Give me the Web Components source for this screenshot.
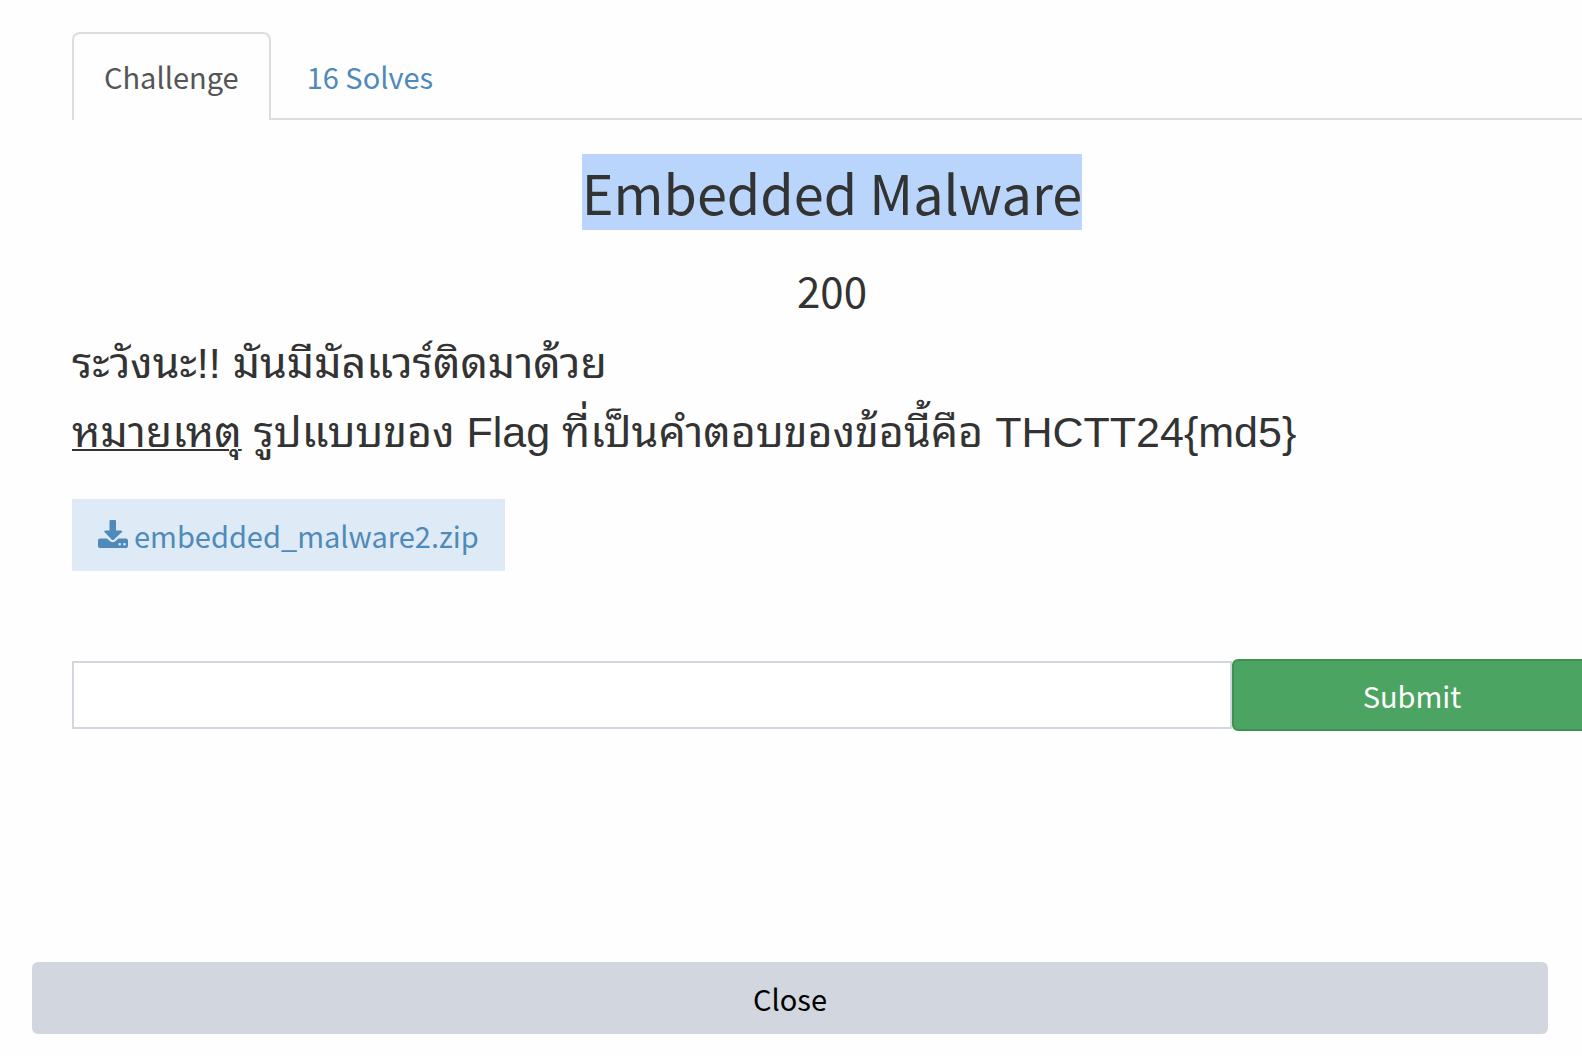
<!DOCTYPE html>
<html lang="th">
<head>
<meta charset="utf-8">
<title>Embedded Malware</title>
<style>
html, body { margin: 0; background: #fefefe; overflow-x: hidden; }
body { color: #333; font: 29px/40px "Noto Sans CJK SC", sans-serif; }
</style>
</head>
<body>
<challenge-modal></challenge-modal>
<script>
const define = (name, html) => {
  const t = document.createElement('template');
  t.innerHTML = html;
  customElements.define(name, class extends HTMLElement {
    constructor() {
      super();
      this.attachShadow({ mode: 'open' }).append(t.content.cloneNode(true));
    }
  });
};

define('challenge-tabs', `
<style>
:host { display: block; }
nav { display: flex; gap: 4px; border-bottom: 2px solid #ddd; }
a { display: block; padding: 22px 30px; border: 2px solid transparent; border-bottom: 0; border-radius: 8px 8px 0 0; line-height: 40px; color: #4f8aba; text-decoration: none; }
a[aria-current] { color: #555; border-color: #ddd; background: #fefefe; margin-bottom: -2px; padding-bottom: 24px; }
</style>
<nav><a href="#challenge" aria-current="page">Challenge</a><a href="#solves">16 Solves</a></nav>`);

define('challenge-heading', `
<style>
:host { display: block; text-align: center; }
h2, h3 { margin: 0; font-weight: 400; }
h2 { padding: 34px 0; font-size: 54px; line-height: 76px; }
mark { display: inline-block; background: #b9d5fb; color: inherit; }
h3 { font-size: 42px; line-height: 52px; }
</style>
<h2><mark><slot name="title"></slot></mark></h2>
<h3><slot name="points"></slot></h3>`);

define('challenge-description', `
<style>
:host { display: block; padding: 13px 0 32px; font: 43px/69px "Liberation Sans", "Noto Sans Thai Looped", "Noto Sans Thai", sans-serif; }
p { margin: 0; }
u { text-decoration-thickness: 2px; text-underline-offset: 2px; }
</style>
<p>ระวังนะ!! มันมีมัลแวร์ติดมาด้วย</p>
<p><u>หมายเหตุ</u> รูปแบบของ Flag ที่เป็นคำตอบของข้อนี้คือ THCTT24{md5}</p>`);

define('file-download', `
<style>
:host { display: flex; }
a { display: flex; align-items: center; gap: 6px; padding: 16px 26px; background: #deebf6; color: #4f8aba; line-height: 40px; text-decoration: none; }
svg { width: 30px; height: 30px; fill: currentColor; }
</style>
<a href="#file"><svg viewBox="0 0 30 30" aria-hidden="true"><path d="M12.500 0h4.500q1 0 1 1v9.500h5q2 0 1 1.500l-8 7.500q-1.300 1-2.500 0l-7-7.500q-1-1.500 1-1.500h4V1q0-1 1-1z"/><path fill-rule="evenodd" d="M2 18.500h7l3.500 3q2.300 1.500 4.500 0l3.500-3h7.500q2 0 2 2v5.500q0 2-2 2H2q-2 0-2-2v-5.500q0-2 2-2zM21.700 23a1.300 1.300 0 1 0 0 2.600 1.300 1.300 0 0 0 0-2.600zM26.500 23a1.300 1.300 0 1 0 0 2.600 1.300 1.300 0 0 0 0-2.600z"/></svg><slot></slot></a>`);

define('flag-form', `
<style>
:host { display: block; }
form { display: flex; align-items: center; }
input { flex: 1; min-width: 0; box-sizing: border-box; height: 68px; padding: 12px 24px; border: 2px solid #d2d6de; border-radius: 0; background: #fff; font: inherit; color: #555; outline: 0; }
button { flex: 0 0 360px; box-sizing: border-box; height: 72px; padding: 0; border: 2px solid #3f9153; border-radius: 6px; background: #4ba461; color: #fff; font: inherit; }
</style>
<form><input type="text" aria-label="Flag"><button type="button">Submit</button></form>`);

define('modal-footer', `
<style>
:host { display: block; padding: 0 34px 22px 32px; }
button { display: block; width: 100%; height: 72px; padding: 0; border: 0; border-radius: 6px; background: #d2d6de; color: #000; font: inherit; }
</style>
<button type="button"><slot></slot></button>`);

define('challenge-modal', `
<style>
:host { display: flex; flex-direction: column; min-height: 100vh; overflow: hidden; }
main { flex: 1; margin: 32px -10px 0 72px; }
flag-form { padding-top: 88px; }
</style>
<main>
  <challenge-tabs></challenge-tabs>
  <challenge-heading><span slot="title">Embedded Malware</span><span slot="points">200</span></challenge-heading>
  <challenge-description></challenge-description>
  <file-download>embedded_malware2.zip</file-download>
  <flag-form></flag-form>
</main>
<modal-footer>Close</modal-footer>`);
</script>
</body>
</html>
